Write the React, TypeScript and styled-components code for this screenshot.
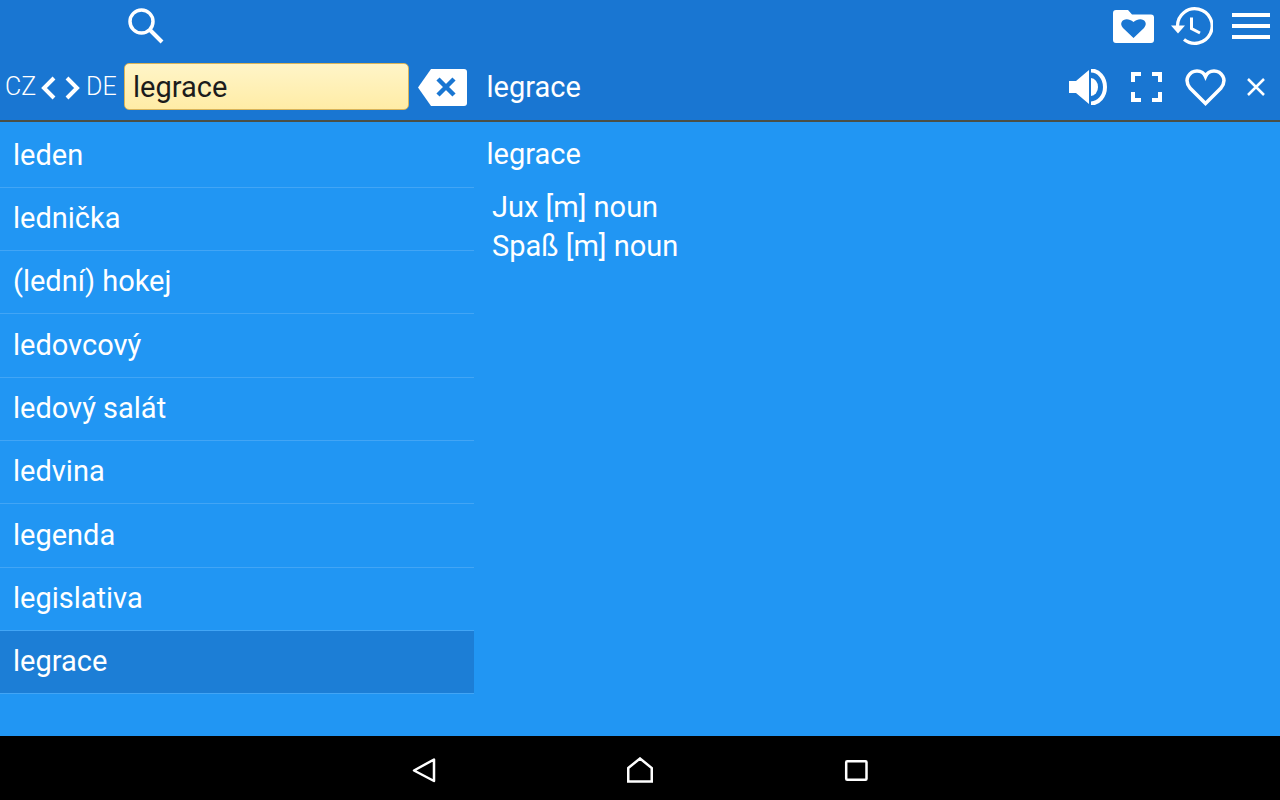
import styled, { createGlobalStyle } from "styled-components";

const GlobalStyle = createGlobalStyle`
  html, body {
    margin: 0;
    padding: 0;
    background: #000;
  }
  #root {
    width: 1280px;
    height: 800px;
  }
`;

const Screen = styled.div`
  width: 1280px;
  height: 800px;
  display: flex;
  flex-direction: column;
  font-family: Roboto, "Liberation Sans", sans-serif;
  color: #fff;
  overflow: hidden;
`;

const Header = styled.header`
  height: 120px;
  flex: none;
  background: #1976d2;
  border-bottom: 2px solid #4a4f45;
  display: flex;
  flex-direction: column;
`;

const TopRow = styled.div`
  height: 52px;
  display: flex;
  align-items: center;
  padding: 0 10px 0 128px;
`;

const TopActions = styled.div`
  margin-left: auto;
  display: flex;
  align-items: center;
`;

const BottomRow = styled.div`
  height: 68px;
  display: flex;
  align-items: center;
`;

const SearchSide = styled.div`
  width: 474px;
  flex: none;
  display: flex;
  align-items: center;
  padding-left: 5px;
  box-sizing: border-box;
`;

const LangCode = styled.span`
  font-size: 25px;
  font-weight: 300;
  line-height: 28px;
  width: 31px;
  margin-top: 2px;
`;

const Chevrons = styled.div`
  display: flex;
  gap: 9px;
  margin: 3px 6px 0 5px;
`;

const SearchBox = styled.div`
  width: 285px;
  height: 47px;
  margin: 1px 0 0 7px;
  box-sizing: border-box;
  border: 1px solid #d9b45a;
  border-radius: 5px;
  background: linear-gradient(#fff5c8, #ffeca6);
  color: #1c1c1c;
  font-size: 29px;
  line-height: 47px;
  padding-left: 8px;
`;

const ClearButton = styled.div`
  margin: 3px 0 0 9px;
  display: flex;
`;

const WordSide = styled.div`
  flex: 1;
  display: flex;
  align-items: center;
  padding: 2px 14px 0 12.5px;
`;

const WordTitle = styled.span`
  font-size: 29px;
`;

const WordActions = styled.div`
  margin-left: auto;
  display: flex;
  align-items: center;
`;

const ActionSlot = styled.div<{ $gap: number }>`
  margin-left: ${(props) => props.$gap}px;
  display: flex;
`;

const Main = styled.main`
  flex: 1;
  display: flex;
  background: #2196f3;
  min-height: 0;
`;

const WordList = styled.ul`
  width: 474px;
  flex: none;
  margin: 2.4px 0 0;
  padding: 0;
  list-style: none;
`;

const WordRow = styled.li<{ $selected?: boolean }>`
  height: 63.33px;
  box-sizing: border-box;
  padding: 0 0 2px 13px;
  display: flex;
  align-items: center;
  font-size: 29px;
  border-bottom: 1px solid #42a5f5;
  background: ${(props) => (props.$selected ? "#1c7ed6" : "transparent")};
`;

const Detail = styled.section`
  flex: 1;
  padding: 12px 0 0 12.5px;
`;

const DetailWord = styled.div`
  font-size: 29px;
  line-height: 40px;
`;

const Meanings = styled.div`
  margin: 14px 0 0 5.5px;
  font-size: 29px;
  line-height: 39px;
`;

const NavBar = styled.nav`
  height: 64px;
  box-sizing: border-box;
  padding-top: 4px;
  flex: none;
  background: #000;
  display: flex;
  align-items: center;
  justify-content: center;
  gap: 190px;
`;

const Icon = styled.svg`
  display: block;
  flex: none;
`;

const words = [
  "leden",
  "lednička",
  "(lední) hokej",
  "ledovcový",
  "ledový salát",
  "ledvina",
  "legenda",
  "legislativa",
  "legrace",
];

export default function App() {
  return (
    <Screen>
      <GlobalStyle />
      <Header>
        <TopRow>
          <Icon width="36" height="36" viewBox="0 0 36 36" fill="none" stroke="#fff">
            <circle cx="13.5" cy="13.5" r="11.500" strokeWidth="3.500" />
            <path d="M21.5 21.5 L34 34" strokeWidth="4" />
          </Icon>
          <TopActions>
            <Icon width="41" height="33" viewBox="0 0 41 33" fill="#fff">
              <path
                fillRule="evenodd"
                d="M3 0 H15 L19 4.500 H38 a3 3 0 0 1 3 3 V30 a3 3 0 0 1 -3 3 H3 a3 3 0 0 1 -3 -3 V3 a3 3 0 0 1 3 -3 Z M20.500 28 L10 18 C4.500 11.500 13 5.500 20.500 12 C28 5.500 36.500 11.500 31 18 Z"
              />
            </Icon>
            <ActionSlot $gap={17}>
              <Icon width="42" height="38" viewBox="0 0 42 38" fill="none" stroke="#fff">
                <path d="M6.500 19 A17.300 17.300 0 1 1 13 32.500" strokeWidth="3.200" />
                <path d="M0 18.500 H14 L7 26.500 Z" fill="#fff" stroke="none" />
                <path d="M20.500 10.500 V21.500 L29 26" strokeWidth="3" />
              </Icon>
            </ActionSlot>
            <ActionSlot $gap={19}>
              <Icon width="38" height="26" viewBox="0 0 38 26" fill="#fff">
                <rect x="0" y="0" width="38" height="4" />
                <rect x="0" y="11" width="38" height="4" />
                <rect x="0" y="22" width="38" height="4" />
              </Icon>
            </ActionSlot>
          </TopActions>
        </TopRow>
        <BottomRow>
          <SearchSide>
            <LangCode>CZ</LangCode>
            <Chevrons>
              <Icon width="15" height="24" viewBox="0 0 15 24" fill="none" stroke="#fff" strokeWidth="4">
                <path d="M13 2 L3 12 L13 22" />
              </Icon>
              <Icon width="15" height="24" viewBox="0 0 15 24" fill="none" stroke="#fff" strokeWidth="4">
                <path d="M2 2 L12 12 L2 22" />
              </Icon>
            </Chevrons>
            <LangCode>DE</LangCode>
            <SearchBox>legrace</SearchBox>
            <ClearButton>
              <Icon width="49" height="37" viewBox="0 0 49 37">
                <path d="M13 0 H46 a3 3 0 0 1 3 3 V34 a3 3 0 0 1 -3 3 H13 L0 18.500 Z" fill="#fff" />
                <path d="M20 10 L36 26 M36 10 L20 26" stroke="#1976d2" strokeWidth="4.500" fill="none" />
              </Icon>
            </ClearButton>
          </SearchSide>
          <WordSide>
            <WordTitle>legrace</WordTitle>
            <WordActions>
              <Icon width="38" height="36" viewBox="0 0 38 36" fill="#fff">
                <path d="M0 12 H7 L20 1 V35 L7 24 H0 Z" />
                <path d="M22 9 A7 9 0 0 1 22 27 Z" />
                <path d="M22 1.500 A14 16.500 0 0 1 22 34.500" fill="none" stroke="#fff" strokeWidth="4" />
              </Icon>
              <ActionSlot $gap={24}>
                <Icon width="31" height="30" viewBox="0 0 31 30" fill="none" stroke="#fff" strokeWidth="4">
                  <path d="M2 10 V2 H10 M21 2 H29 V10 M29 20 V28 H21 M10 28 H2 V20" />
                </Icon>
              </ActionSlot>
              <ActionSlot $gap={23}>
                <Icon width="41" height="37" viewBox="0 0 41 37" fill="none" stroke="#fff" strokeWidth="3.500">
                  <path d="M20.500 34.500 L5 19 C-2 10 5 2 12 2 C16 2 19 4 20.500 7.500 C22 4 25 2 29 2 C36 2 43 10 36 19 Z" />
                </Icon>
              </ActionSlot>
              <ActionSlot $gap={20}>
                <Icon width="20" height="20" viewBox="0 0 20 20" fill="none" stroke="#fff" strokeWidth="2.500">
                  <path d="M2 2 L18 18 M18 2 L2 18" />
                </Icon>
              </ActionSlot>
            </WordActions>
          </WordSide>
        </BottomRow>
      </Header>
      <Main>
        <WordList>
          {words.map((word) => (
            <WordRow key={word} $selected={word === "legrace"}>
              {word}
            </WordRow>
          ))}
        </WordList>
        <Detail>
          <DetailWord>legrace</DetailWord>
          <Meanings>
            <div>Jux [m] noun</div>
            <div>Spaß [m] noun</div>
          </Meanings>
        </Detail>
      </Main>
      <NavBar>
        <Icon width="26" height="26" viewBox="0 0 26 26" fill="none" stroke="#fff" strokeWidth="2.500">
          <path d="M23 2.500 V24 L3 13.500 Z" strokeLinejoin="round" />
        </Icon>
        <Icon width="26" height="26" viewBox="0 0 26 26" fill="none" stroke="#fff" strokeWidth="2.500">
          <path d="M1.250 11 L13 1.500 L24.750 11 V24.500 H1.250 Z" />
        </Icon>
        <Icon width="26" height="26" viewBox="0 0 26 26" fill="none" stroke="#fff" strokeWidth="2.500">
          <rect x="3.200" y="4.200" width="20.300" height="18.600" rx="1" />
        </Icon>
      </NavBar>
    </Screen>
  );
}
